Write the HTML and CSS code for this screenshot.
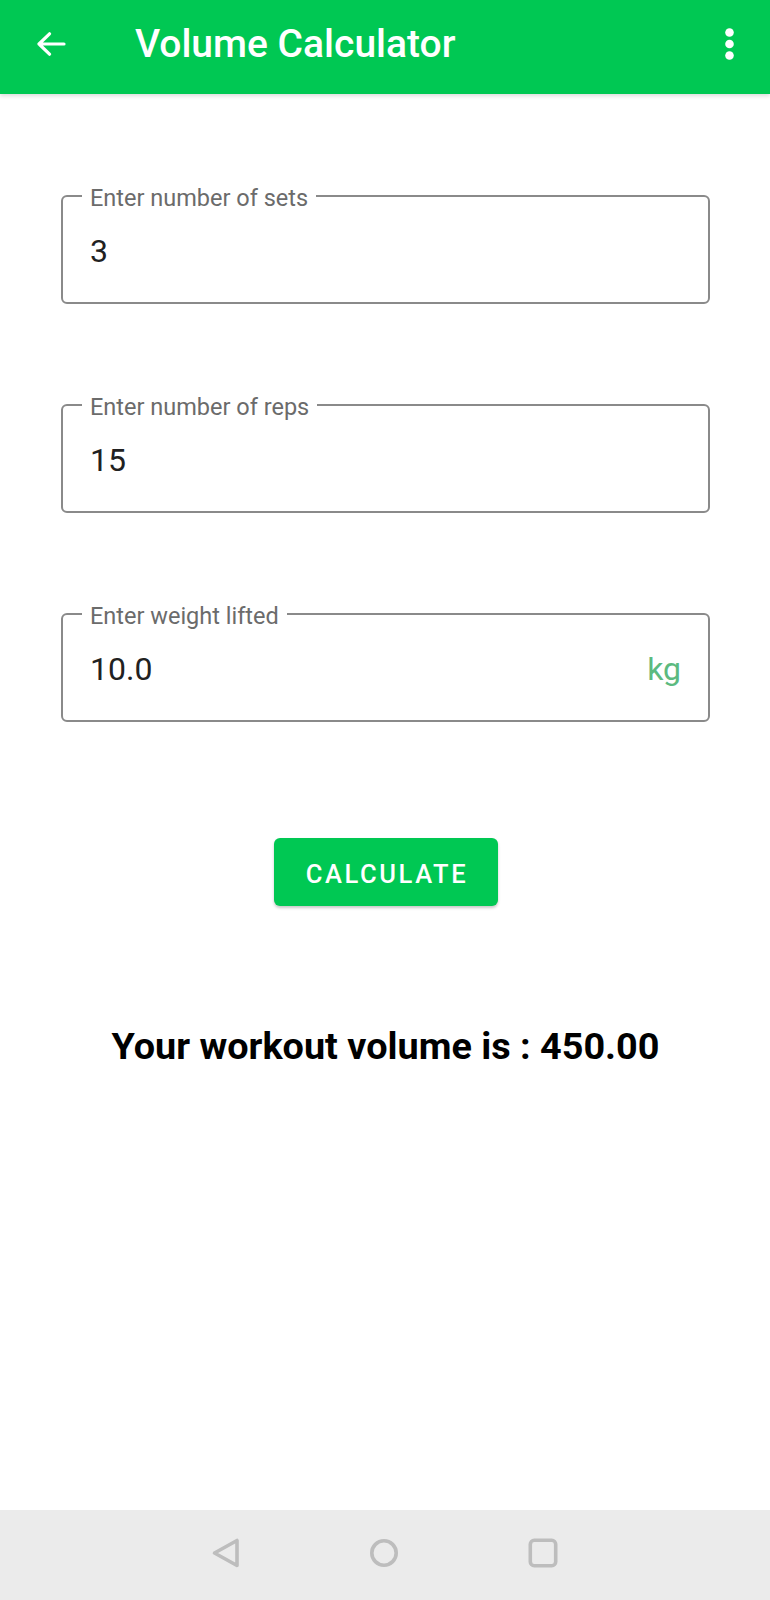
FILE: index.html
```html
<!DOCTYPE html>
<html lang="en">
<head>
<meta charset="utf-8">
<title>Volume Calculator</title>
<link rel="stylesheet" href="styles.css">
</head>
<body>
<header class="appbar">
  <svg class="back" width="30" height="24" viewBox="0 0 30 24" aria-hidden="true">
    <path d="M28 12H3M13.5 1.8L3 12l10.5 10.2" fill="none" stroke="#fff" stroke-width="3.2" stroke-linecap="round" stroke-linejoin="round"/>
  </svg>
  <h1 class="title">Volume Calculator</h1>
  <svg class="more" width="9" height="32" viewBox="0 0 9 32" aria-hidden="true">
    <circle cx="4.5" cy="4.5" r="4.3" fill="#fff"/>
    <circle cx="4.5" cy="16" r="4.3" fill="#fff"/>
    <circle cx="4.5" cy="27.5" r="4.3" fill="#fff"/>
  </svg>
</header>

<main class="content">
  <fieldset class="field">
    <legend class="label">Enter number of sets</legend>
    <div class="value-row"><span class="value">3</span></div>
  </fieldset>

  <fieldset class="field">
    <legend class="label">Enter number of reps</legend>
    <div class="value-row"><span class="value">15</span></div>
  </fieldset>

  <fieldset class="field">
    <legend class="label">Enter weight lifted</legend>
    <div class="value-row"><span class="value">10.0</span><span class="suffix">kg</span></div>
  </fieldset>

  <div class="actions">
    <button class="btn" type="button">CALCULATE</button>
  </div>

  <p class="result">Your workout volume is : 450.00</p>
</main>

<nav class="navbar">
  <svg width="28" height="30" viewBox="0 0 28 30" aria-hidden="true">
    <path d="M25 2.5V27.5L2.5 15Z" fill="none" stroke="#bdbdbd" stroke-width="3.6" stroke-linejoin="round"/>
  </svg>
  <svg width="30" height="30" viewBox="0 0 30 30" aria-hidden="true">
    <circle cx="15" cy="15" r="12.2" fill="none" stroke="#bdbdbd" stroke-width="3.6"/>
  </svg>
  <svg width="30" height="30" viewBox="0 0 30 30" aria-hidden="true">
    <rect x="2.3" y="2.3" width="25.4" height="25.4" rx="4" fill="none" stroke="#bdbdbd" stroke-width="3.6"/>
  </svg>
</nav>
</body>
</html>
```

FILE: styles.css
```css
* {
  box-sizing: border-box;
}

html, body {
  margin: 0;
  padding: 0;
}

body {
  width: 770px;
  min-height: 1600px;
  display: flex;
  flex-direction: column;
  background: #ffffff;
  font-family: Roboto, "Noto Sans", "Liberation Sans", sans-serif;
}

.appbar {
  height: 94px;
  flex: 0 0 auto;
  display: flex;
  align-items: center;
  padding: 0 36px 7px 36px;
  background: #00c853;
  box-shadow: 0 2px 4px rgba(0, 0, 0, 0.14);
  position: relative;
  z-index: 1;
}

.back {
  display: block;
  flex: 0 0 auto;
}

.title {
  margin: 0 0 0 69px;
  flex: 1 1 auto;
  font-size: 39px;
  line-height: 46px;
  font-weight: 500;
  color: #ffffff;
  letter-spacing: 0;
}

.more {
  display: block;
  flex: 0 0 auto;
}

.content {
  flex: 1 1 auto;
  padding: 87px 60px 0 61px;
  display: flex;
  flex-direction: column;
}

.field {
  margin: 0 0 86px 0;
  min-width: 0;
  border: 2px solid #8a8a8a;
  border-radius: 6px;
  padding: 20px 27px 31px 19px;
}

.field:nth-of-type(3) {
  margin-bottom: 0;
}

.label {
  padding: 4px 8px 0 8px;
  font-size: 23.5px;
  line-height: 26px;
  color: #6b6b6b;
}

.value-row {
  display: flex;
  align-items: baseline;
  justify-content: space-between;
  padding-left: 8px;
  height: 40px;
}

.value {
  font-size: 32px;
  line-height: 40px;
  color: #212121;
}

.suffix {
  font-size: 32px;
  line-height: 40px;
  color: #5cba7f;
}

.actions {
  display: flex;
  justify-content: center;
  margin-top: 116px;
}

.btn {
  width: 224px;
  height: 68px;
  border: none;
  border-radius: 6px;
  background: #00c853;
  color: #ffffff;
  font-family: Roboto, "Noto Sans", "Liberation Sans", sans-serif;
  font-size: 25.5px;
  font-weight: 500;
  letter-spacing: 2.6px;
  padding: 3px 0 0 3px;
  box-shadow: 0 2px 3px rgba(0, 0, 0, 0.22);
}

.result {
  margin: 118px 0 0 0;
  text-align: center;
  font-size: 37.8px;
  line-height: 45px;
  font-weight: 700;
  color: #000000;
}

.navbar {
  flex: 0 0 auto;
  height: 90px;
  background: #ebebeb;
  display: flex;
  align-items: center;
  justify-content: center;
  gap: 129px;
  padding: 0 0 4px 0;
}

.navbar svg {
  display: block;
}
```
